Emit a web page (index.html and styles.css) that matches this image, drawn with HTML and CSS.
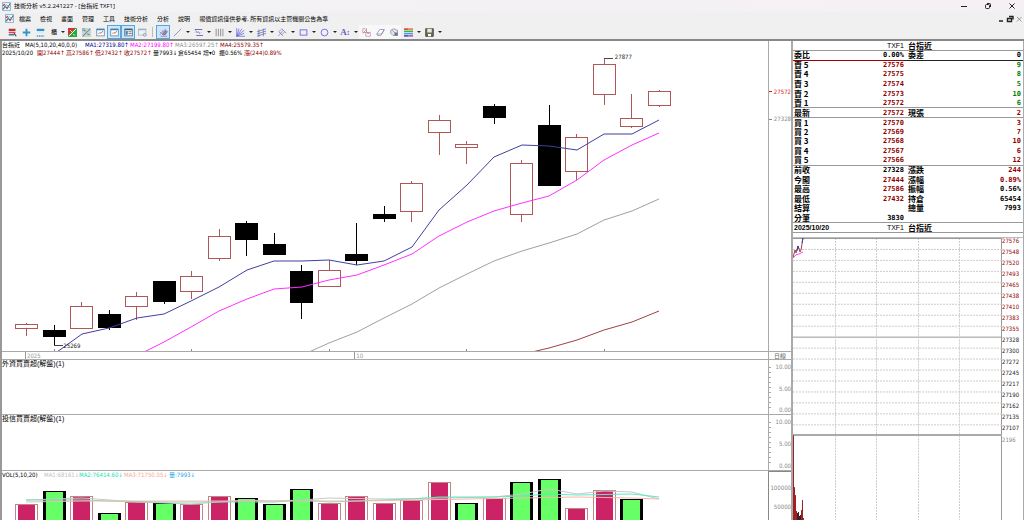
FILE: index.html
```
<!DOCTYPE html>
<html lang="zh-Hant">
<head>
    <meta charset="UTF-8">
    <meta name="viewport" content="width=device-width, initial-scale=1.0">
    <title>技術分析 v5.2.241227 - [台指近 TXF1]</title>
    <link rel="stylesheet" href="styles.css">
</head>
<body>
    <svg class="defs" aria-hidden="true">
        <symbol id="logo" viewBox="0 0 12 12">
            <rect width="12" height="12" fill="#c9dcea"/>
            <rect x="1" y="1" width="10" height="10" fill="#fff" stroke="#6f9fbe"/>
            <path d="M1 10L4 6L7 8L11 2" fill="none" stroke="#2b6e99" stroke-width="1.4"/>
            <path d="M2 3L5 5M7 4L10 8M3 9L6 3" fill="none" stroke="#5b86a5"/>
            <path d="M1 5L4 3M6 9L8 7" stroke="#d0402c" stroke-width="1.6"/>
        </symbol>
    </svg>

    <header class="titlebar">
        <svg class="logo"><use href="#logo"/></svg>
        <span class="title">技術分析 v5.2.241227 - [台指近 TXF1]</span>
        <div class="win-controls">
            <button type="button" aria-label="最小化"><svg viewBox="0 0 8 8"><path d="M1 4.5H7"/></svg></button>
            <button type="button" aria-label="還原"><svg viewBox="0 0 8 8"><rect x="1.5" y="2.5" width="4" height="4" rx="1"/><path d="M3 1.5H5.5Q6.5 1.5 6.5 2.5V5"/></svg></button>
            <button type="button" aria-label="關閉"><svg viewBox="0 0 8 8"><path d="M1.5 1.5L6.5 6.5M6.5 1.5L1.5 6.5"/></svg></button>
        </div>
    </header>

    <nav class="menubar">
        <svg class="logo"><use href="#logo"/></svg>
        <a href="#">檔案</a>
        <a href="#">檢視</a>
        <a href="#">畫面</a>
        <a href="#">管理</a>
        <a href="#">工具</a>
        <a href="#">技術分析</a>
        <a href="#">分析</a>
        <a href="#">說明</a>
        <span>報價資訊僅供參考, 所有資訊以主管機關公告為準</span>
        <div class="mdi-controls">
            <button type="button" aria-label="最小化視窗"><svg viewBox="0 0 8 8"><path d="M2 6H6" stroke-width="1.5"/></svg></button>
            <button type="button" aria-label="還原視窗"><svg viewBox="0 0 8 8"><path d="M3 1.5H7V4.5M1.5 3.5H5.5V6.5H1.5Z" stroke-width="1.4"/></svg></button>
            <button type="button" aria-label="關閉視窗" class="dim"><svg viewBox="0 0 8 8"><path d="M2 2L6.5 6.5M6.5 2L2 6.5"/></svg></button>
        </div>
    </nav>

    <div class="toolbar">
        <button type="button" class="tool" aria-label="清單"><svg viewBox="0 0 12 12"><rect x="1" y="1" width="9" height="3" fill="#c03030"/><rect x="1" y="5" width="9" height="2" fill="#d04848"/><rect x="1" y="8" width="7" height="2" fill="#3a78a8"/><path d="M8 7L11 11" stroke="#333" stroke-width="1.5"/></svg></button>
        <button type="button" class="tool" aria-label="新增"><svg viewBox="0 0 12 12"><path d="M6 1V11M1 6H11" stroke="#2f96c8" stroke-width="2.4"/></svg></button>
        <button type="button" class="tool" aria-label="版面"><svg viewBox="0 0 12 12"><rect x="1" y="1" width="10" height="3" fill="#3890c4"/><rect x="1" y="4" width="10" height="3" fill="#d8eaf4"/><path d="M1 10.5H11" stroke="#4a9cc8" stroke-width="2" stroke-dasharray="2 1"/></svg></button>
        <button type="button" class="tool text">櫃</button>
        <button type="button" class="drop narrow" aria-label="櫃選單"></button>
        <button type="button" class="tool" aria-label="漲跌"><svg viewBox="0 0 12 12"><rect width="12" height="12" fill="#2aa83a"/><path d="M0 0H10L0 10Z" fill="#d83030"/><path d="M1 11L11 1M3 3L5 5M7 8L9 10" stroke="#fff" stroke-width="1.3"/></svg></button>
        <button type="button" class="tool" aria-label="比較"><svg viewBox="0 0 12 12"><rect width="12" height="12" fill="#c6d4d2"/><path d="M1 11L11 1M2 3L5 4M7 8L10 9" stroke="#5f8790" stroke-width="1.4"/><path d="M0 0H5L0 5Z" fill="#9fb3b5"/></svg></button>
        <button type="button" class="tool" aria-label="走勢"><svg viewBox="0 0 12 12"><rect x="1" y="1.5" width="10" height="9" fill="#fff" stroke="#4383b0"/><path d="M1 2H11" stroke="#4383b0" stroke-width="2"/><path d="M3 8L5 6L7 7L9 4" fill="none" stroke="#d66040" stroke-width="1.2"/></svg></button>
        <button type="button" class="tool active" aria-label="技術圖" aria-pressed="true"><svg viewBox="0 0 12 12"><rect x="1" y="1.5" width="10" height="9" fill="#fff" stroke="#4383b0"/><path d="M1 2H11" stroke="#4383b0" stroke-width="2"/><path d="M3 8L5 6L7 7L9 4" fill="none" stroke="#d66040" stroke-width="1.2"/></svg></button>
        <button type="button" class="tool active" aria-label="報價欄" aria-pressed="true"><svg viewBox="0 0 12 12"><rect x="1" y="1.5" width="10" height="9" fill="#fff" stroke="#35617f"/><path d="M1 2H11" stroke="#35617f" stroke-width="2"/><rect x="2" y="4" width="3" height="5" fill="#4383b0"/><path d="M6 5H10M6 7.500H10" stroke="#444"/></svg></button>
        <button type="button" class="tool" aria-label="設定"><svg viewBox="0 0 12 12"><rect x="0.500" y="1.500" width="10" height="8" fill="#eef2f5" stroke="#9fb6c4"/><path d="M0 2H11" stroke="#9fb6c4" stroke-width="2"/><circle cx="9" cy="9" r="2" fill="#ddd" stroke="#8d9aa2"/></svg></button>
        <span class="sep"></span>
        <button type="button" class="tool active" aria-label="畫線" aria-pressed="true"><svg viewBox="0 0 12 12"><path d="M1 9L9 1M1 5L6 10M2 11H11M4 3L9 9" stroke="#7878c8" fill="none"/><path d="M5 8L9 3L11 5L8 9Z" fill="#c08088" stroke="#705080"/></svg></button>
        <button type="button" class="tool" aria-label="直線"><svg viewBox="0 0 12 12"><path d="M1 11L11 1" stroke="#7070d8"/></svg></button>
        <button type="button" class="drop" aria-label="直線選單"></button>
        <button type="button" class="tool" aria-label="區間"><svg viewBox="0 0 12 12"><path d="M1 2H11M3 10H12" stroke="#6868d8" stroke-width="1.3"/><path d="M2 3L4 6L6 5L8 8" fill="none" stroke="#777"/><path d="M1 6H11" stroke="#aaa" stroke-dasharray="1 1"/></svg></button>
        <button type="button" class="drop" aria-label="區間選單"></button>
        <button type="button" class="tool" aria-label="週期線"><svg viewBox="0 0 12 12"><path d="M1.500 1V11M4.500 1V11M7.500 1V11M10.500 1V11" stroke="#777"/></svg></button>
        <button type="button" class="drop" aria-label="週期線選單"></button>
        <button type="button" class="tool" aria-label="扇形線"><svg viewBox="0 0 12 12"><path d="M1 0V11H12M1 11L4 1M1 11L8 1M1 11L11 3M1 11L11 7" fill="none" stroke="#6464dc"/></svg></button>
        <button type="button" class="drop" aria-label="扇形線選單"></button>
        <button type="button" class="tool" aria-label="通道線"><svg viewBox="0 0 12 12"><path d="M0 5L12 1M0 8L12 4M0 11L12 7" stroke="#6464dc"/><path d="M2.500 2V12M8.500 1V11" stroke="#777"/></svg></button>
        <button type="button" class="drop" aria-label="通道線選單"></button>
        <button type="button" class="tool" aria-label="叉線"><svg viewBox="0 0 12 12"><path d="M1 5L5 1L11 7M3 7L7 3M5 9L9 5M0 11L5 6M1 5L7 11" fill="none" stroke="#8080b4"/></svg></button>
        <button type="button" class="drop" aria-label="叉線選單"></button>
        <button type="button" class="tool" aria-label="矩形"><svg viewBox="0 0 12 12"><rect x="1.500" y="2.500" width="9" height="7" fill="none" stroke="#6868e0" stroke-width="1.2"/></svg></button>
        <button type="button" class="drop" aria-label="矩形選單"></button>
        <button type="button" class="tool" aria-label="圓形"><svg viewBox="0 0 12 12"><circle cx="6" cy="6" r="4.500" fill="none" stroke="#6868e0" stroke-width="1.2"/></svg></button>
        <button type="button" class="drop" aria-label="圓形選單"></button>
        <button type="button" class="tool letter">A:</button>
        <button type="button" class="drop" aria-label="文字選單"></button>
        <button type="button" class="tool light" aria-label="複製"><svg viewBox="0 0 12 12"><path d="M1 1H6V6H1ZM5 6H11V11H5Z" fill="#fff" stroke="#b090b0"/><path d="M1 7L5 3L8 8L11 5" fill="none" stroke="#d07080"/></svg></button>
        <button type="button" class="tool light" aria-label="橡皮擦"><svg viewBox="0 0 12 12"><path d="M1 8L5 2H11L8 8L6 10H2Z" fill="#fff" stroke="#8888a8"/><path d="M1 8H7L11 2" fill="none" stroke="#8888a8"/></svg></button>
        <button type="button" class="tool light" aria-label="清除"><svg viewBox="0 0 12 12"><path d="M1 3L5 1L10 3V10H4L1 7Z" fill="#e4e4ee" stroke="#8888a8"/><path d="M3 3L10 10" stroke="#c07080"/><path d="M6 6H10V10H6Z" fill="#607890"/></svg></button>
        <button type="button" class="tool" aria-label="顏色"><svg viewBox="0 0 12 12"><path d="M0 1.500H6" stroke="#e03030" stroke-width="2"/><path d="M6 1.500H12" stroke="#e07820" stroke-width="2"/><path d="M0 4.500H12" stroke="#30b840" stroke-width="2"/><path d="M0 7.500H12" stroke="#38a8d8" stroke-width="2"/><path d="M0 10.500H6" stroke="#4040d0" stroke-width="2"/><path d="M6 10.500H12" stroke="#c040c0" stroke-width="2"/></svg></button>
        <button type="button" class="drop" aria-label="顏色選單"></button>
        <button type="button" class="tool" aria-label="儲存"><svg viewBox="0 0 12 12"><rect x="1" y="1" width="10" height="10" fill="#6c6c48" stroke="#333"/><rect x="3" y="1" width="6" height="5" fill="#e8e8e0"/><rect x="4" y="8" width="4" height="3" fill="#fff"/></svg></button>
        <button type="button" class="drop" aria-label="儲存選單"></button>
    </div>

    <main class="workspace">
        <section class="charts">
            <div class="pane main-pane">
                <div class="plot">
                    <svg id="priceChart" viewBox="2 41 766 310" preserveAspectRatio="none"></svg>
                    <div class="info">
                        <p class="ma-line">
                            <span class="name">台指近</span>
                            <span class="params">MA(5,10,20,40,0,0)</span>
                            <span class="ma navy">MA1:27319.80↑</span>
                            <span class="ma magenta">MA2:27199.80↑</span>
                            <span class="ma gray">MA3:26597.25↑</span>
                            <span class="ma darkred">MA4:25579.35↑</span>
                        </p>
                        <p class="ohlc-line">
                            <span class="date">2025/10/20</span>
                            <span class="price darkred">開27444↑</span>
                            <span class="price darkred">高27586↑</span>
                            <span class="price darkred">低27432↑</span>
                            <span class="price darkred">收27572↑</span>
                            <span class="small">量7993↓</span>
                            <span class="small">倉65454</span>
                            <span class="tiny">增▾0</span>
                            <span class="small">振0.56%</span>
                            <span class="darkred">漲(244)0.89%</span>
                        </p>
                    </div>
                    <span class="mark high">27877</span>
                    <span class="mark low">25269</span>
                </div>
                <div class="axis">
                    <span class="level last">27572</span>
                    <span class="level prev">27328</span>
                </div>
            </div>

            <div class="pane dates">
                <div class="plot">
                    <span class="month year">2025</span>
                    <span class="month oct">10</span>
                </div>
                <div class="axis period">日線</div>
            </div>

            <div class="pane">
                <div class="plot"><p class="pane-title">外資買賣超(解盤)(1)</p></div>
                <div class="axis scale"><span>10.00</span><span>5.00</span><span>0.00</span></div>
            </div>

            <div class="pane">
                <div class="plot"><p class="pane-title">投信買賣超(解盤)(1)</p></div>
                <div class="axis scale"><span>10.00</span><span>5.00</span><span>0.00</span></div>
            </div>

            <div class="pane">
                <div class="plot">
                    <svg id="volumeChart" viewBox="2 471 766 49" preserveAspectRatio="none"></svg>
                    <p class="vol-line">
                        <span class="vol-name">VOL(5,10,20)</span>
                        <span class="vol-ma1">MA1:68161↓</span>
                        <span class="vol-ma2">MA2:76414.60↓</span>
                        <span class="vol-ma3">MA3:71750.05↓</span>
                        <span class="vol-now">量:7993↓</span>
                    </p>
                </div>
                <div class="axis scale volume"><span>100000</span><span>50000</span></div>
            </div>
        </section>

        <aside class="quote">
            <table>
                <colgroup><col class="c-label"><col class="c-value"><col class="c-label"><col></colgroup>
                <tr class="heading"><td></td><td>TXF1</td><th>台指近</th><td></td></tr>
                <tr class="line ratio"><th>委比</th><td>0.00%</td><th>委差</th><td>0</td></tr>
                <tr><th>賣 5</th><td class="up">27576</td><td></td><td class="sell">9</td></tr>
                <tr><th>賣 4</th><td class="up">27575</td><td></td><td class="sell">8</td></tr>
                <tr><th>賣 3</th><td class="up">27574</td><td></td><td class="sell">5</td></tr>
                <tr><th>賣 2</th><td class="up">27573</td><td></td><td class="sell">10</td></tr>
                <tr><th>賣 1</th><td class="up">27572</td><td></td><td class="sell">6</td></tr>
                <tr class="line"><th>最新</th><td class="up">27572</td><th>現張</th><td class="up">2</td></tr>
                <tr class="line"><th>買 1</th><td class="up">27570</td><td></td><td class="up">3</td></tr>
                <tr><th>買 2</th><td class="up">27569</td><td></td><td class="up">7</td></tr>
                <tr><th>買 3</th><td class="up">27568</td><td></td><td class="up">10</td></tr>
                <tr><th>買 4</th><td class="up">27567</td><td></td><td class="up">6</td></tr>
                <tr><th>買 5</th><td class="up">27566</td><td></td><td class="up">12</td></tr>
                <tr class="line"><th>前收</th><td>27328</td><th>漲跌</th><td class="up">244</td></tr>
                <tr><th>今開</th><td class="up">27444</td><th>漲幅</th><td class="up">0.89%</td></tr>
                <tr><th>最高</th><td class="up">27586</td><th>振幅</th><td>0.56%</td></tr>
                <tr><th>最低</th><td class="up">27432</td><th>持倉</th><td>65454</td></tr>
                <tr><th>結算</th><td></td><th>總量</th><td>7993</td></tr>
                <tr><th>分筆</th><td>3830</td><td></td><td></td></tr>
                <tr class="line heading"><th class="day">2025/10/20</th><td>TXF1</td><th>台指近</th><td></td></tr>
            </table>

            <div class="intraday">
                <svg id="intradayChart" viewBox="793 237 209 283" preserveAspectRatio="none"></svg>
                <div class="ticks">
                    <div id="priceTicks" class="price-ticks"></div>
                    <span class="vol-tick">2196</span>
                </div>
            </div>
        </aside>
    </main>

    <script>
        const first = 26.5;
        const step = 27.5;

        // [up, body top, body bottom, high, low]
        const candles = [
            [1, 324, 328, 323, 336], [0, 330, 336, 325, 345], [1, 306, 328, 302, 329],
            [0, 314, 327, 310, 330], [1, 296, 306, 292, 320], [0, 281, 301, 281, 304],
            [1, 276, 291, 271, 299], [1, 236, 258, 229, 261], [0, 223, 239, 221, 256],
            [0, 244, 254, 233, 255], [0, 271, 302, 265, 319], [1, 270, 286, 260, 287],
            [0, 254, 260, 223, 265], [0, 214, 218, 206, 222], [1, 183, 211, 181, 222],
            [1, 120, 132, 115, 155], [1, 144, 147, 141, 164], [0, 106, 117, 104, 124],
            [1, 163, 214, 160, 222], [0, 125, 185, 105, 186], [1, 137, 171, 134, 180],
            [1, 64, 94, 58, 105], [1, 118, 126, 94, 128], [1, 91, 105, 90, 107]
        ];

        const averages = [
            ['#4040a0', '57,352 82,334 109,328 137,318 164,314 191,301 219,287 247,270 274,261 302,261 329,260 357,265 384,261 412,247 439,210 467,185 494,157 522,145 549,146 577,150 604,134 632,134 659,120'],
            ['#ff30ff', '144,352 164,342 191,327 219,311 247,299 274,289 302,287 329,280 357,275 384,265 412,254 439,236 467,222 494,211 522,203 549,196 577,180 604,160 632,145 659,133'],
            ['#a0a0a0', '309,352 329,343 357,332 384,318 412,304 439,288 467,274 494,261 522,251 549,243 577,234 604,220 632,211 659,199'],
            ['#a04040', '532,352 549,348 577,340 604,330 632,322 659,311']
        ];

        // [up, top of bar]
        const volumes = [
            [1, 504], [0, 491], [1, 496], [0, 513], [1, 502], [0, 503], [1, 504], [1, 496],
            [0, 498], [0, 504], [0, 489], [1, 503], [1, 496], [1, 503], [1, 500], [1, 482],
            [0, 503], [1, 498], [0, 482], [0, 479], [1, 508], [1, 490], [0, 499]
        ];

        const volumeAverages = [
            ['#c8c8c8', '26,500 54,499 82,498 109,500 137,502 164,503 191,504 219,502 247,500 274,501 302,500 329,498 384,499 439,498 494,497 522,494 549,489 577,494 604,491 632,492 659,499'],
            ['#60e8c8', '26,500 82,500 109,501 164,502 219,502 274,502 302,500 329,502 357,501 412,499 439,497 494,497 522,496 549,494 577,495 632,494 659,497'],
            ['#f8b8a8', '26,502 82,501 137,501 191,501 247,501 302,501 357,501 412,500 467,499 522,498 577,497 632,498 659,499']
        ];

        function line(x1, y1, x2, y2, color, extra) {
            return `<line x1="${x1}" y1="${y1}" x2="${x2}" y2="${y2}" stroke="${color}" ${extra || ''}/>`;
        }

        function polylines(list) {
            return list.map(([color, points]) => `<polyline points="${points}" stroke="${color}"/>`).join('');
        }

        function drawPrices() {
            let out = '';
            candles.forEach(([up, top, bottom, high, low], i) => {
                const x = first + step * i;
                const color = up ? '#b05858' : '#000';
                out += line(x, high, x, top, color) + line(x, bottom, x, low, color);
                out += `<rect x="${x - 11}" y="${top + 0.5}" width="22" height="${bottom - top}" fill="${up ? '#fff' : '#000'}" stroke="${color}"/>`;
            });
            out += polylines(averages);
            // leader lines of the highest and lowest price
            out += line(604, 58.5, 613, 58.5, '#444') + line(54, 345.5, 63, 345.5, '#444');
            // time ticks
            [54, 191.5, 329, 466.5, 604].forEach(x => {
                out += line(x, 349, x, 352, '#888');
            });
            document.getElementById('priceChart').innerHTML = out;
        }

        function drawVolumes() {
            let out = '';
            volumes.forEach(([up, top], i) => {
                const x = first + step * i;
                out += `<rect x="${x - 11}" y="${top + 0.5}" width="22" height="60" fill="${up ? '#fff' : '#000'}" stroke="${up ? '#c48484' : '#000'}"/>`;
                out += `<rect x="${x - 8.5}" y="${top + 1}" width="17" height="60" fill="${up ? '#cc2266' : '#66ff66'}"/>`;
            });
            out += polylines(volumeAverages);
            document.getElementById('volumeChart').innerHTML = out;
        }

        function drawIntraday() {
            let out = '';
            for (let i = 0; i < 18; i++) {
                const y = 237.5 + 11 * i;
                out += i === 9 ? line(793, y, 1002, y, '#999') : line(793, y, 1002, y, '#ccc', 'stroke-dasharray="2 1"');
            }
            for (let i = 1; i < 5; i++) {
                const x = 793.5 + Math.round(41.5 * i);
                out += line(x, 237, x, 520, '#ccc', 'stroke-dasharray="2 1"');
            }
            out += line(793, 237.5, 1002, 237.5, '#999') + line(793, 435, 1002, 435, '#aaa', 'stroke-width="2"');
            out += '<polyline points="793,257 795,249 796,252 798,245 800,251 801,249 803,237" stroke="#a04040"/>';
            out += '<polyline points="797,250 798,245 799,248" stroke="#4040a0"/><polyline points="802,242 803,237" stroke="#4040a0"/>';
            out += '<polyline points="793,257 796,254 799,253 803,251" stroke="#ff40ff"/>';
            const bars = [435, 487, 495, 511, 513, 512, 516, 515, 510, 500, 518];
            bars.forEach((top, i) => {
                out += line(793.5 + i, top, 793.5 + i, 520, i > 3 && i < 8 ? '#402020' : '#a02020');
            });
            document.getElementById('intradayChart').innerHTML = out;

            const ticks = [27576, 27548, 27520, 27493, 27465, 27438, 27410, 27383, 27355, 27328, 27300, 27272, 27245, 27217, 27190, 27162, 27135, 27107];
            document.getElementById('priceTicks').innerHTML = ticks
                .map(t => `<span class="${t > 27328 ? 'up' : ''}">${t}</span>`).join('');
        }

        drawPrices();
        drawVolumes();
        drawIntraday();
    </script>
</body>
</html>
```
FILE: styles.css
```
* {
    box-sizing: border-box;
}
body {
    margin: 0;
    min-height: 100vh;
    display: flex;
    flex-direction: column;
    background-color: #f0f0f0;
    color: #000;
    font-family: "Open Sans", "Noto Sans CJK TC", sans-serif;
    font-size: 6px;
    line-height: 8px;
}
p {
    margin: 0;
}
button {
    border: 0;
    padding: 0;
    background: none;
    color: inherit;
    font: inherit;
}
.defs {
    display: none;
}
.logo {
    width: 9px;
    height: 9px;
    flex: none;
}

/* window bars */
.titlebar {
    height: 12px;
    display: flex;
    align-items: center;
    gap: 3px;
    padding-left: 2px;
    background: linear-gradient(90deg, #f2f2f4, #f5f0f3);
}
.win-controls {
    margin-left: auto;
    display: flex;
}
.win-controls button {
    width: 24px;
    height: 12px;
}
.win-controls svg,
.mdi-controls svg {
    width: 8px;
    height: 8px;
    display: block;
    margin: auto;
    fill: none;
    stroke: #222;
}
.menubar {
    height: 13px;
    display: flex;
    align-items: center;
    gap: 9px;
    padding-left: 5px;
}
.menubar .logo {
    margin-right: -4px;
}
.menubar a {
    color: #000;
    text-decoration: none;
}
.mdi-controls {
    margin-left: auto;
    display: flex;
    padding-right: 1px;
}
.mdi-controls button {
    width: 9px;
}
.mdi-controls .dim svg {
    stroke: #999;
}
.toolbar {
    height: 14px;
    display: flex;
    align-items: center;
    padding-left: 5px;
}
.tool {
    width: 14px;
    height: 14px;
    border: 1px solid transparent;
}
.tool svg {
    width: 9px;
    height: 9px;
    display: block;
    margin: auto;
}
.tool.active {
    background-color: #cfe6f8;
    border-color: #58a4dc;
}
.tool.light {
    background-color: #f8f8f8;
}
.tool.letter {
    color: #6060c0;
    font-family: "Liberation Serif", serif;
    font-size: 9px;
    font-weight: bold;
}
.drop {
    width: 7px;
    height: 14px;
}
.drop.narrow {
    width: 4px;
}
.drop::before {
    content: "";
    display: block;
    width: 0;
    margin: auto;
    border: 2px solid transparent;
    border-top-color: #222;
    border-bottom: 0;
}
.sep {
    width: 7px;
    height: 10px;
    border-left: 1px solid #bbb;
    margin-left: 3px;
    margin-right: -3px;
}

/* charts */
.workspace {
    flex: 1;
    display: flex;
    border-top: 2px solid #888;
    background-color: #fff;
}
.charts {
    flex: 1;
    display: grid;
    grid-template-rows: minmax(0, 1fr) 8px 55px 56px 50px;
    border-left: 2px solid #999;
    font-family: "DejaVu Sans Condensed", "Liberation Sans", "Noto Sans CJK TC", sans-serif;
}
.pane {
    display: grid;
    grid-template-columns: minmax(0, 1fr) 23px;
    border-top: 1px solid #aaa;
}
.main-pane {
    border-top: 0;
}
.plot {
    position: relative;
    overflow: hidden;
}
.plot svg,
.intraday svg {
    position: absolute;
    left: 0;
    top: 0;
    width: 100%;
    height: 100%;
    fill: none;
}
.plot polyline,
.intraday polyline {
    fill: none;
    stroke-width: 1;
}
.plot rect,
.plot line,
.intraday line {
    shape-rendering: crispEdges;
}
.info {
    position: relative;
}
.info p {
    display: flex;
    white-space: nowrap;
}
.name {
    width: 23px;
}
.params {
    width: 60px;
}
.ma {
    width: 45px;
}
.date {
    width: 35px;
}
.price {
    width: 29px;
}
.small {
    width: 25px;
}
.tiny {
    width: 16px;
}
.navy {
    color: #000090;
}
.magenta {
    color: #ff00ff;
}
.gray {
    color: #909090;
}
.darkred {
    color: #900000;
}
.mark {
    position: absolute;
    color: #222;
}
.mark.high {
    left: 80%;
    top: 4%;
}
.mark.low {
    left: 8%;
    top: 97%;
}
.axis {
    position: relative;
    border-left: 1px solid #aaa;
    color: #888;
    text-align: right;
}
.level {
    position: absolute;
    left: 0;
    right: 0;
    display: flex;
    align-items: center;
    justify-content: space-between;
}
.level::before {
    content: "";
    width: 3px;
    height: 1px;
    background-color: currentColor;
}
.level.last {
    top: 15%;
    color: #e02020;
}
.level.prev {
    top: 24%;
}
.month {
    position: absolute;
    top: 0;
    padding-left: 1px;
    border-left: 1px solid #999;
    color: #999;
    line-height: 7px;
}
.month.year {
    left: 3%;
}
.month.oct {
    left: 46%;
}
.axis.period {
    line-height: 7px;
    text-align: center;
    color: #666;
}
.pane-title {
    font-family: "Liberation Sans", "Noto Sans CJK TC", sans-serif;
    font-size: 7px;
    line-height: 8px;
}
.axis.scale {
    display: flex;
    flex-direction: column;
    justify-content: space-between;
    padding: 3px 0 0;
    background: repeating-linear-gradient(#aaa 0 1px, transparent 1px 5px) 0 7px / 2px 44px no-repeat;
}
.axis.volume {
    justify-content: flex-start;
    gap: 11px;
    padding-top: 12px;
    background: none;
    border-top: 1px solid #888;
    border-left-color: #888;
}
.vol-line {
    position: relative;
    display: flex;
    line-height: 7px;
    white-space: nowrap;
}
.vol-name {
    width: 42px;
}
.vol-ma1 {
    width: 35px;
    color: #c0c0c0;
}
.vol-ma2 {
    width: 45px;
    color: #20e0b0;
}
.vol-ma3 {
    width: 45px;
    color: #f8a898;
}
.vol-now {
    color: #20a8e8;
}

/* quote panel */
.quote {
    width: 233px;
    display: flex;
    flex-direction: column;
    border-left: 2px solid #aaa;
    border-right: 1px solid #aaa;
}
.quote table {
    width: 100%;
    height: 192px;
    table-layout: fixed;
    border-collapse: collapse;
    border-bottom: 1px solid #999;
    line-height: 8px;
}
.c-label {
    width: 29px;
}
.c-value {
    width: 82px;
}
.quote tr {
    height: 9px;
}
.quote th,
.quote td {
    padding: 0;
    white-space: nowrap;
}
.quote th {
    padding-left: 1px;
    text-align: left;
    font-family: "Noto Sans CJK TC", sans-serif;
    font-size: 8px;
    font-weight: bold;
}
.quote td + th {
    padding-left: 4px;
}
.quote td {
    text-align: right;
    font-family: "DejaVu Sans Mono", monospace;
    font-size: 7px;
    font-weight: bold;
}
.quote td:last-child {
    padding-right: 2px;
}
.quote .heading td {
    font-family: "Liberation Sans", sans-serif;
    font-weight: normal;
}
.quote th.day {
    font-family: "Liberation Sans", sans-serif;
    font-size: 7px;
}
.quote .line > * {
    border-top: 1px solid #999;
}
.ratio > * {
    border-bottom: 1px solid #222;
}
.ratio > :nth-child(-n+2) {
    border-bottom-color: #a00000;
}
.quote .up {
    color: #900000;
}
.quote .sell {
    color: #008000;
}
.intraday {
    flex: 1;
    position: relative;
    display: flex;
    justify-content: flex-end;
    margin-top: 4px;
    border-top: 1px solid #bbb;
    font-family: "DejaVu Sans Condensed", "Liberation Sans", sans-serif;
}
.intraday svg {
    width: calc(100% - 21px);
}
.ticks {
    width: 22px;
    border-left: 1px solid #999;
    color: #222;
}
.price-ticks {
    display: grid;
    grid-auto-rows: 11px;
    line-height: 6px;
}
.vol-tick {
    color: #888;
}
```
